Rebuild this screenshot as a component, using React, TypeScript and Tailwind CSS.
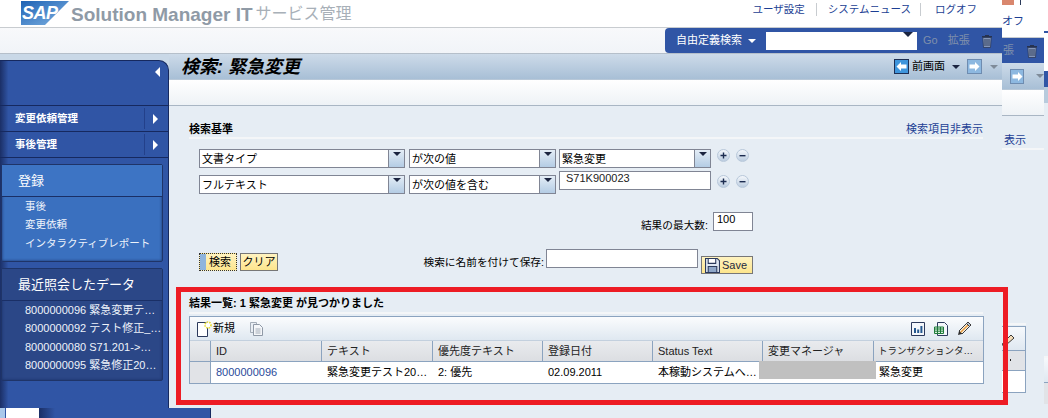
import type { ReactNode } from "react";

const recent = ["8000000096 緊急変更テ…", "8000000092 テスト修正_…", "8000000080 S71.201->…", "8000000095 緊急修正20…"];
const columns = [
  { label: "ID", value: "8000000096", w: "w-[111px]" },
  { label: "テキスト", value: "緊急変更テスト20…", w: "w-[111px]" },
  { label: "優先度テキスト", value: "2: 優先", w: "w-[110px]" },
  { label: "登録日付", value: "02.09.2011", w: "w-[110px]" },
  { label: "Status Text", value: "本稼動システムへ…", w: "w-[110px]" },
  { label: "変更マネージャ", value: "", w: "w-[111px]" },
  { label: "トランザクションタ…", value: "緊急変更", w: "flex-1" },
];

function Trash() {
  return (
    <svg width="12" height="14" viewBox="0 0 12 14">
      <path d="M1 2h10v1.5H1z M4 1h4v1H4z" fill="#26324f" />
      <path d="M1.8 3.5h8.4L9.5 13.5h-7z" fill="#8496b8" stroke="#26324f" strokeWidth="0.7" />
      <path d="M4 5v7M6 5v7M8 5v7" stroke="#33405f" strokeWidth="1" />
    </svg>
  );
}

function ArrowBox({ dir, active }: { dir: "left" | "right"; active?: boolean }) {
  return (
    <div className={`flex size-[15px] items-center justify-center border ${active ? "border-[#1d2f55] bg-[#3e95dc]" : "border-[#6e8cb0] bg-[#8db8e0]"}`}>
      <svg width="11" height="11" viewBox="0 0 11 11">
        <path d={dir === "left" ? "M0.5 5.5L5 1v2.5h5.5v4H5V10z" : "M10.5 5.5L6 1v2.5H0.5v4H6V10z"} fill="#fff" />
      </svg>
    </div>
  );
}

function Tri({ className }: { className: string }) {
  return <div className={`h-0 w-0 border-x-[4px] border-t-[4px] border-x-transparent ${className}`} />;
}

function Select({ w, label, className = "" }: { w: string; label: string; className?: string }) {
  return (
    <div className={`flex h-[19px] shrink-0 border border-[#808594] bg-white ${w} ${className}`}>
      <div className="flex-1 truncate pl-[2px] text-[11px] leading-[18px] text-black">{label}</div>
      <div className="flex w-[16px] justify-center border-l border-[#808594] bg-gradient-to-b from-[#e4edf6] to-[#b4cce4] pt-[2px]">
        <div className="h-0 w-0 border-x-[4px] border-t-[4px] border-x-transparent border-t-[#1b2440]" />
      </div>
    </div>
  );
}

function Round({ minus }: { minus?: boolean }) {
  return (
    <div className="flex size-[13px] items-center justify-center rounded-full border border-[#b8c8da] bg-gradient-to-b from-[#f4f7fb] to-[#bccde0]">
      <svg width="7" height="7" viewBox="0 0 7 7">
        <path d={minus ? "M0.5 3h6v1.4h-6z" : "M0.5 2.8h6v1.4h-6z M2.8 0.5h1.4v6H2.8z"} fill="#1c2c50" />
      </svg>
    </div>
  );
}

function SideRow({ label }: { label: string }) {
  return (
    <div className="flex h-[26px] items-center border-b border-[#16295f]">
      <div className="w-[144px] pl-[15px] text-[10.5px] font-bold text-white">{label}</div>
      <div className="flex h-[21px] flex-1 items-center justify-center border-l border-[#23408a] pr-[2px]">
        <div className="h-0 w-0 border-y-[5px] border-l-[5px] border-y-transparent border-l-white" />
      </div>
    </div>
  );
}

function Panel({ title, head, body, h, children }: { title: string; head: string; body: string; h: string; children: ReactNode }) {
  return (
    <div className={`mx-[1px] w-[162px] rounded-[2px] border border-[#1f3468] shadow-[inset_0_0_3px_#1a2f66] ${h} ${body}`}>
      <div className={`flex h-[32px] items-center border-b border-[#1a2f66] pl-[16px] text-[13px] text-white ${head}`}>{title}</div>
      <div className="flex flex-col pl-[23px] text-[10.5px] leading-[18.3px] text-[#eef3fb]">{children}</div>
    </div>
  );
}

function Ghost() {
  return (
    <div className="flex w-[42px] shrink-0 flex-col bg-[#e6edf4]">
      <div className="flex h-[5px] bg-white">
        <div className="w-[12px] bg-[#d9876e]" />
        <div className="ml-[2px] w-[4px] bg-white" />
        <div className="w-[1px] bg-[#2b3a5a]" />
      </div>
      <div className="h-[33px] border-b border-[#c8ccd0] bg-white pt-[9px] text-[11px] leading-[14px] text-[#1c3f94]">オフ</div>
      <div className="flex h-[25px] items-center justify-between bg-[#3055a5] pl-[1px] pr-[6px] text-[11px] text-[#7f8fab]">
        <span>張</span>
        <Trash />
      </div>
      <div className="flex h-[27px] items-center gap-[12px] border-b border-[#b8c8d8] bg-gradient-to-b from-[#cddbe9] to-[#a8bfd6] pl-[8px]">
        <ArrowBox dir="right" />
        <Tri className="border-t-[#7f8b99]" />
      </div>
      <div className="h-[26px] border-b border-[#a9b6c4] bg-gradient-to-b from-white to-[#eef2f6]" />
      <div className="mt-[18px] h-[16px] border-b-2 border-[#f4f6f8] pl-[2px] text-[11px] leading-[12px] text-[#1c3f94]">表示</div>
      <div className="mt-[173px] h-[2px] w-[24px] bg-[#f4f6f8]" />
      <div className="mt-[1px] flex h-[67px] w-[24px] flex-col border-y border-r border-[#8ba3bf] bg-white">
        <div className="h-[24px] overflow-hidden border-b border-[#8ba3bf] bg-gradient-to-b from-[#f6f9fc] to-[#dfe8f1]">
          <svg width="14" height="15" viewBox="0 0 14 15" className="mt-[4px]">
            <path d="M0 14l1-2 8-8 3 3-8 7z" fill="#f3dcb8" stroke="#3a3a3a" />
          </svg>
        </div>
        <div className="h-[20px] border-b border-[#8ba3bf] bg-[#e1e3e7] pl-[8px] pt-[8px]">
          <div className="h-[2px] w-[1px] bg-[#222]" />
        </div>
      </div>
    </div>
  );
}

function Ghost2() {
  return (
    <div className="flex w-[4px] shrink-0 flex-col bg-[#e6edf4]">
      <div className="h-[31px] bg-white" />
      <div className="h-[2px] bg-[#3055a5]" />
      <div className="h-[38px] bg-white" />
      <div className="h-[16px] bg-[#3055a5]" />
      <div className="h-[16px] bg-[#b8cbdd]" />
      <div className="mt-[253px] h-[2px] bg-[#f4f6f8]" />
      <div className="h-[25px] border-b border-[#8ba3bf] bg-gradient-to-b from-[#f6f9fc] to-[#dfe8f1]" />
      <div className="h-[21px] bg-[#e1e3e7]" />
    </div>
  );
}

export default function App() {
  return (
    <div className="relative flex h-[418px] w-[1048px] overflow-hidden bg-[#e6edf4] [font-family:'Liberation_Sans','Noto_Sans_CJK_JP',sans-serif]">
      <div className="flex w-[1002px] shrink-0 flex-col">
        {/* header */}
        <div className="flex h-[28px] items-start border-b border-[#c8ccd0] bg-white">
          <div className="ml-[21px] mt-[1px] h-[24px] w-[48px] bg-gradient-to-br from-[#1b62b4] to-[#7fb3e2] pl-[1px] text-[18px] font-bold italic leading-[25px] tracking-[-0.5px] text-white [clip-path:polygon(0_0,100%_0,50%_100%,0_100%)]">
            SAP
          </div>
          <div className="ml-[2px] mt-[3px] text-[19px] font-bold leading-[24px] text-[#8f9aa6]">Solution Manager IT</div>
          <div className="ml-[3px] mt-[2px] text-[16px] leading-[24px] text-[#a8b0b8]">サービス管理</div>
          <div className="ml-auto mr-[25px] mt-[2px] flex items-center text-[10.5px] leading-[14px] text-[#1c3f94]">
            <span>ユーザ設定</span>
            <span className="mx-[11px] h-[13px] w-px bg-[#c8ccd0]" />
            <span>システムニュース</span>
            <span className="ml-[9px] mr-[14px] h-[13px] w-px bg-[#c8ccd0]" />
            <span>ログオフ</span>
          </div>
        </div>
        <div className="flex h-[26px] justify-end border-b border-[#b5bfca] bg-gradient-to-b from-[#f8f9fb] to-[#f1f4f8]">
          <div className="flex h-[25px] w-[337px] items-center rounded-l-[4px] bg-[#3055a5] pl-[11px] text-[11px] text-white">
            <span>自由定義検索</span>
            <Tri className="ml-[6px] border-t-white" />
            <div className="ml-[10px] flex h-[18px] w-[151px] justify-end bg-white pr-[4px]">
              <div className="h-0 w-0 border-x-[5px] border-t-[5px] border-x-transparent border-t-[#1b2440]" />
            </div>
            <span className="ml-[6px] text-[#7f8fab]">Go</span>
            <span className="ml-[10px] text-[#7f8fab]">拡張</span>
            <div className="ml-[11px] flex">
              <Trash />
            </div>
          </div>
        </div>

        <div className="flex min-h-0 flex-1">
          {/* sidebar */}
          <div className="flex w-[169px] shrink-0 flex-col bg-[#c9d8e7]">
            <div className="h-[6px]" />
            <div className="flex h-[348px] flex-col rounded-tr-[10px] border-r border-t border-[#16295f] bg-gradient-to-r from-[#1b2f66] from-0% via-[#3055a5] via-[5%] to-[#3055a5]">
              <div className="flex h-[45px] items-start justify-end border-b border-[#16295f] pr-[8px] pt-[6px]">
                <div className="h-0 w-0 border-y-[5px] border-r-[5px] border-y-transparent border-r-white" />
              </div>
              <SideRow label="変更依頼管理" />
              <SideRow label="事後管理" />
              <div className="mt-[6px] flex flex-col gap-[6px]">
                <Panel title="登録" head="bg-[#3d74c4]" body="bg-[#3a70bf]" h="h-[98px]">
                  <span>事後</span>
                  <span>変更依頼</span>
                  <span>インタラクティブレポート</span>
                </Panel>
                <Panel title="最近照会したデータ" head="bg-[#2b4787]" body="bg-[#2b4787]" h="h-[113px]">
                  {recent.map((r) => (
                    <span key={r} className="whitespace-nowrap text-[11px]">{r}</span>
                  ))}
                </Panel>
              </div>
            </div>
          </div>

          {/* main */}
          <div className="flex min-w-0 flex-1 flex-col">
            <div className="flex h-[26px] items-center border-b border-[#b8c8d8] bg-gradient-to-b from-[#cddbe9] to-[#a8bfd6] pl-[12px] pr-[4px]">
              <div className="text-[18px] font-bold italic leading-[24px] text-black">検索: 緊急変更</div>
              <div className="ml-auto flex items-center">
                <ArrowBox dir="left" active />
                <span className="ml-[3px] w-[34px] text-[11px] text-black">前画面</span>
                <Tri className="ml-[6px] border-t-[#1b2440]" />
                <div className="ml-[7px]">
                  <ArrowBox dir="right" />
                </div>
                <Tri className="ml-[8px] border-t-[#7f8b99]" />
              </div>
            </div>
            <div className="h-[26px] border-b border-[#a9b6c4] bg-gradient-to-b from-white to-[#eef2f6]" />

            <div className="flex flex-col pl-[20px] pr-[19px]">
              <div className="flex h-[33px] items-end justify-between border-b-2 border-[#f4f6f8] pb-[1px] text-[11px] leading-[14px]">
                <span className="font-bold text-black">検索基準</span>
                <span className="text-[#1c3f94]">検索項目非表示</span>
              </div>

              <div className="ml-[10px] mt-[10px] flex">
                <Select w="w-[206px]" label="文書タイプ" />
                <Select w="w-[147px]" label="が次の値" className="ml-[4px]" />
                <Select w="w-[152px]" label="緊急変更" className="ml-[3px]" />
                <div className="ml-[6px] flex items-start gap-[6px]">
                  <Round />
                  <Round minus />
                </div>
              </div>

              <div className="ml-[10px] mt-[3px] flex items-start">
                <Select w="w-[206px]" label="フルテキスト" className="mt-[4px]" />
                <Select w="w-[147px]" label="が次の値を含む" className="ml-[4px] mt-[4px]" />
                <div className="ml-[3px] h-[19px] w-[152px] border border-[#808594] bg-white pl-[6px] text-[11px] leading-[12px] text-[#222]">S71K900023</div>
                <div className="ml-[6px] mt-[4px] flex gap-[6px]">
                  <Round />
                  <Round minus />
                </div>
              </div>

              <div className="mt-[18px] flex justify-end pr-[230px]">
                <span className="mr-[5px] mt-[6px] text-[10.7px] leading-[14px] text-black">結果の最大数:</span>
                <div className="h-[19px] w-[40px] border border-[#808594] bg-white pl-[3px] text-[11px] leading-[13px] text-black">100</div>
              </div>

              <div className="ml-[10px] mt-[17px] flex items-start">
                <button className="mt-[4px] flex h-[18px] w-[38px] items-center border border-dotted border-[#333] bg-gradient-to-b from-[#fff3c0] to-[#fde58c] text-[11px] text-black">
                  <span className="h-full w-[6px] bg-[#8fb4dc]" />
                  <span className="pl-[3px]">検索</span>
                </button>
                <button className="ml-[3px] mt-[4px] h-[18px] w-[38px] border border-[#777] bg-gradient-to-b from-[#fff3c0] to-[#fde58c] text-[11px] text-black">クリア</button>
                <span className="ml-auto mt-[6px] text-[10.7px] leading-[14px] text-black">検索に名前を付けて保存:</span>
                <div className="ml-[2px] h-[19px] w-[152px] border border-[#808594] bg-white" />
                <button className="ml-[3px] mr-[230px] mt-[7px] flex h-[18px] w-[52px] shrink-0 items-center gap-[2px] border border-[#777] bg-gradient-to-b from-[#fff3c0] to-[#fde58c] pl-[3px] text-[11px] text-[#1f2a44]">
                  <svg width="15" height="15" viewBox="0 0 14 14">
                    <path d="M0.5 0.5h11l2 2v11h-13z" fill="#dfe7f2" stroke="#2c3a5c" />
                    <path d="M3 0.5h7v4.5H3z" fill="#fff" stroke="#2c3a5c" />
                    <path d="M3 8h8v5.5H3z" fill="#8fa7c8" stroke="#2c3a5c" />
                  </svg>
                  Save
                </button>
              </div>

              <div className="mt-[22px] h-[18px] border-b-2 border-[#f4f6f8] text-[11px] font-bold leading-[14px] text-black">結果一覧: 1 緊急変更 が見つかりました</div>

              {/* results table */}
              <div className="mt-[2px] w-[795px] border border-[#8ba3bf] bg-white">
                <div className="flex h-[24px] items-center border-b border-[#c3d0de] bg-gradient-to-b from-[#fbfcfd] to-[#dfe8f1] pl-[7px] pr-[11px] text-[11px] text-black">
                  <svg width="16" height="16" viewBox="0 0 16 16">
                    <path d="M0.5 1.5h10v14h-10z" fill="#fff" stroke="#2c3a5c" />
                    <circle cx="11" cy="4" r="3" fill="#fff" stroke="#e8dc30" strokeWidth="1.6" strokeDasharray="1.5 1" />
                  </svg>
                  <span>新規</span>
                  <svg className="ml-[14px]" width="15" height="15" viewBox="0 0 15 15">
                    <path d="M1.5 1.5h6v10h-6z" fill="#e9eef4" stroke="#a4adb8" />
                    <path d="M4.5 3.5h6l3 3v8h-9z" fill="#f4f6f9" stroke="#8f99a6" />
                    <path d="M6.5 8h5M6.5 10h5M6.5 12h5" stroke="#a4adb8" />
                  </svg>
                  <div className="ml-auto flex items-center gap-[9px]">
                    <svg width="14" height="14" viewBox="0 0 14 14">
                      <path d="M0.5 0.5h13v13h-13z" fill="#f4f7fb" stroke="#2c3a5c" />
                      <path d="M3 6h2v5H3zM6.2 7.5h2V11h-2zM9.4 4h2v7h-2z" fill="#25588f" />
                    </svg>
                    <svg width="14" height="14" viewBox="0 0 14 14">
                      <path d="M3.5 0.5h7l3 3v10h-10z" fill="#f4f7fb" stroke="#2c3a5c" />
                      <path d="M0.5 5h9v6.5h-9z" fill="#d9f0dd" stroke="#1e7a3a" />
                      <path d="M0.5 7h9M0.5 9.2h9M3.5 5v6.5M6.5 5v6.5" stroke="#1e7a3a" />
                    </svg>
                    <svg width="15" height="15" viewBox="0 0 15 15">
                      <path d="M2 10l7.5-7.5 3 3L5 13z" fill="#f6efe2" stroke="#3a3a3a" />
                      <path d="M3.5 11.5l7.5-7.5" stroke="#e79a3a" strokeWidth="1.4" />
                      <path d="M9.5 2.5L11 1l3 3-1.5 1.5z" fill="#b9c2cf" stroke="#3a3a3a" />
                      <path d="M2 10l-1 4 4-1z" fill="#2e2e2e" />
                    </svg>
                  </div>
                </div>
                <div className="flex h-[21px] border-b border-[#8ba3bf] bg-gradient-to-b from-[#e9ebee] to-[#dcdee2] text-[11px] leading-[20px] text-[#222]">
                  <div className="w-[21px] shrink-0 border-r border-[#8ba3bf]" />
                  {columns.map((c) => (
                    <div key={c.label} className={`${c.w} shrink-0 whitespace-nowrap border-r border-[#8ba3bf] pl-[5px] last:border-r-0 last:pl-[4px] last:text-[9.5px]`}>{c.label}</div>
                  ))}
                </div>
                <div className="flex h-[21px] text-[11px] leading-[20px] text-black">
                  <div className="w-[21px] shrink-0 border-r border-[#8ba3bf] bg-[#e1e3e7]" />
                  {columns.map((c, i) => (
                    <div key={c.label} className={`relative ${c.w} shrink-0 whitespace-nowrap pl-[5px] ${i === 0 ? "text-[#2a4a9a]" : ""}`}>
                      {c.value}
                    </div>
                  ))}
                </div>
                <div className="absolute left-[759px] top-[361px] h-[18px] w-[117px] bg-[#c0c0c0]" />
              </div>
            </div>
          </div>
        </div>
      </div>

      <Ghost />
      <Ghost2 />

      {/* bottom strip of the window behind */}
      <div className="absolute bottom-0 left-0 flex h-[10px] w-[211px] border-r border-[#16295f] bg-[#3055a5]">
        <div className="w-[5px] bg-[#a9c8ea]" />
        <div className="ml-[1px] w-[33px] bg-white" />
        <div className="w-[16px] bg-gradient-to-r from-[#1b2f66] to-[#3055a5]" />
      </div>

      {/* red annotation box */}
      <div className="absolute left-[176px] top-[287px] h-[118px] w-[832px] border-[5px] border-[#ed1c24]" />
    </div>
  );
}
